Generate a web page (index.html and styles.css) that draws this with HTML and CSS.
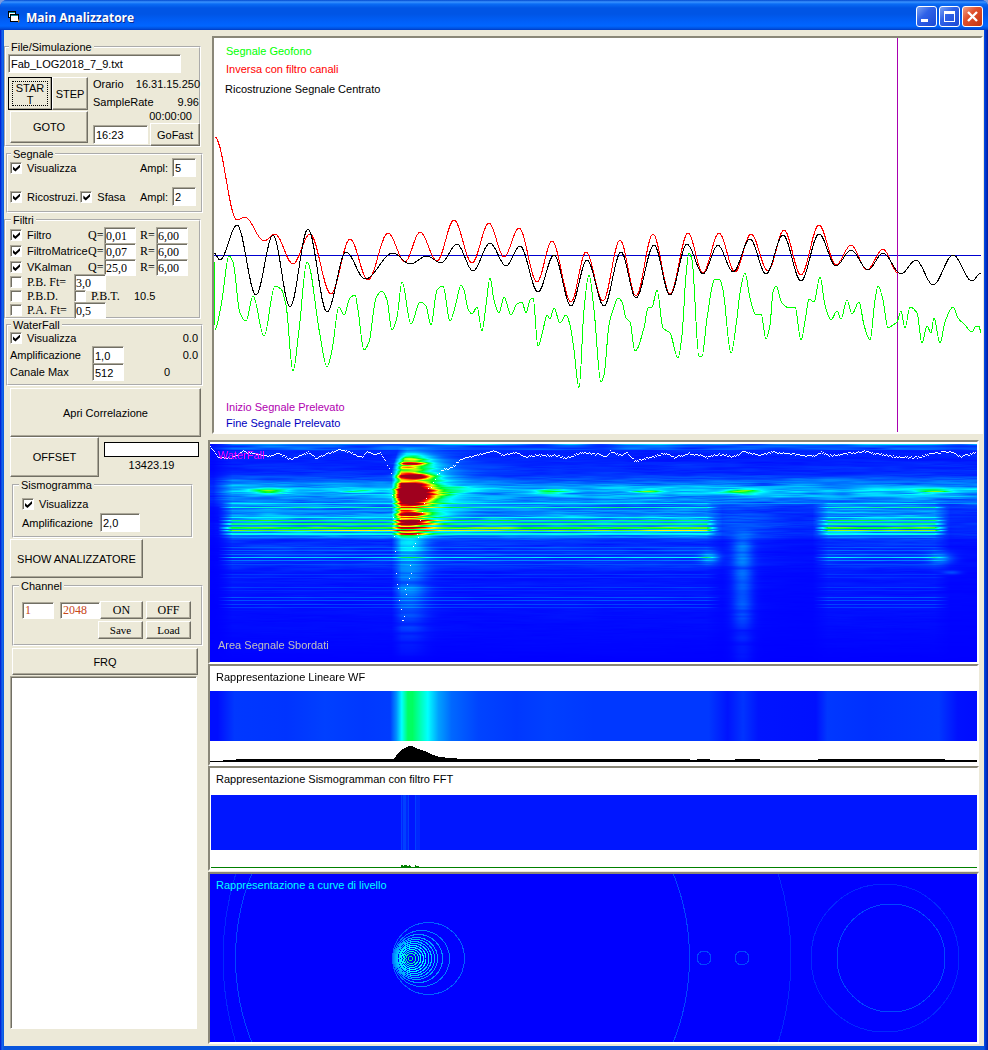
FILE: index.html
```html
<!DOCTYPE html>
<html lang="it">
<head>
<meta charset="utf-8">
<title>Main Analizzatore</title>
<link rel="stylesheet" href="styles.css">
</head>
<body>
<div class="window">
  <header class="titlebar">
    <svg class="app-icon" width="14" height="14" viewBox="0 0 14 14" aria-hidden="true">
      <rect x="1.5" y="1.5" width="7" height="6" fill="#fff" stroke="#000"/>
      <rect x="2" y="2" width="6" height="1" fill="#0a8a9a"/>
      <rect x="3.5" y="4.5" width="8" height="7" fill="#fff" stroke="#000"/>
      <rect x="4" y="5" width="7" height="1" fill="#0a8a9a"/>
      <path d="M11 9l2 2-2 2z" fill="#b87820"/>
    </svg>
    <h1 class="title">Main Analizzatore</h1>
    <div class="window-buttons">
      <button class="wb" aria-label="Riduci"><svg width="19" height="19"><rect x="4" y="12" width="7" height="3" fill="#fff"/></svg></button>
      <button class="wb" aria-label="Ingrandisci"><svg width="19" height="19"><path d="M4 4h11v11H4zM5 7v7h9V7z" fill="#fff" fill-rule="evenodd"/></svg></button>
      <button class="wb wb-close" aria-label="Chiudi"><svg width="19" height="19"><path d="M5 5l9 9M14 5l-9 9" stroke="#fff" stroke-width="2.4"/></svg></button>
    </div>
  </header>

  <main class="client">
    <section class="sidebar">
      <fieldset class="group group-file">
        <legend>File/Simulazione</legend>
        <input class="field file-name" aria-label="File" value="Fab_LOG2018_7_9.txt">
        <div class="file-body">
          <div class="file-buttons">
            <button class="btn btn-start">START</button>
            <button class="btn">STEP</button>
            <button class="btn btn-goto">GOTO</button>
          </div>
          <div class="file-info">
            <div class="pair"><span>Orario</span><span>16.31.15.250</span></div>
            <div class="pair pair-rate"><span>SampleRate</span><span>9.96</span></div>
            <div class="elapsed">00:00:00</div>
            <div class="go-row">
              <input class="field" aria-label="Ora" value="16:23">
              <button class="btn">GoFast</button>
            </div>
          </div>
        </div>
      </fieldset>

      <fieldset class="group wide group-segnale">
        <legend>Segnale</legend>
        <div class="seg-row">
          <label class="check"><input type="checkbox" checked>Visualizza</label>
          <label for="ampl1">Ampl:</label><input id="ampl1" class="field" value="5">
        </div>
        <div class="seg-row">
          <div class="seg-checks">
            <label class="check"><input type="checkbox" checked>Ricostruzi.</label>
            <label class="check"><input type="checkbox" checked>Sfasa</label>
          </div>
          <label for="ampl2">Ampl:</label><input id="ampl2" class="field" value="2">
        </div>
      </fieldset>

      <fieldset class="group group-filtri">
        <legend>Filtri</legend>
        <div class="filter-row">
          <label class="check"><input type="checkbox" checked>Filtro</label>
          <label class="serif" for="q1">Q=</label><input id="q1" class="field serif" value="0,01">
          <label class="serif" for="r1">R=</label><input id="r1" class="field serif" value="6,00">
        </div>
        <div class="filter-row">
          <label class="check"><input type="checkbox" checked>FiltroMatrice</label>
          <label class="serif" for="q2">Q=</label><input id="q2" class="field serif" value="0,07">
          <label class="serif" for="r2">R=</label><input id="r2" class="field serif" value="6,00">
        </div>
        <div class="filter-row">
          <label class="check"><input type="checkbox" checked>VKalman</label>
          <label class="serif" for="q3">Q=</label><input id="q3" class="field serif" value="25,0">
          <label class="serif" for="r3">R=</label><input id="r3" class="field serif" value="6,00">
        </div>
        <div class="band-row">
          <label class="check serif"><input type="checkbox">P.B. Ft=</label>
          <input class="field serif" aria-label="P.B. Ft" value="3,0">
        </div>
        <div class="band-row">
          <label class="check serif"><input type="checkbox">P.B.D.</label>
          <label class="check serif"><input type="checkbox">P.B.T.</label>
          <span>10.5</span>
        </div>
        <div class="band-row">
          <label class="check serif"><input type="checkbox">P.A. Ft=</label>
          <input class="field serif" aria-label="P.A. Ft" value="0,5">
        </div>
      </fieldset>

      <fieldset class="group wide group-waterfall">
        <legend>WaterFall</legend>
        <div class="wf-row"><label class="check"><input type="checkbox" checked>Visualizza</label><span class="num">0.0</span></div>
        <div class="wf-row"><label for="amp">Amplificazione</label><input id="amp" class="field" value="1,0"><span class="num">0.0</span></div>
        <div class="wf-row"><label for="can">Canale Max</label><input id="can" class="field" value="512"><span class="num-mid">0</span></div>
      </fieldset>

      <button class="btn btn-apri">Apri Correlazione</button>
      <div class="offset-row">
        <button class="btn">OFFSET</button>
        <div class="offset-value">
          <div class="gauge"></div>
          <span>13423.19</span>
        </div>
      </div>

      <fieldset class="group group-sismo">
        <legend>Sismogramma</legend>
        <label class="check"><input type="checkbox" checked>Visualizza</label>
        <div class="sismo-row"><label for="samp">Amplificazione</label><input id="samp" class="field" value="2,0"></div>
      </fieldset>

      <button class="btn btn-show">SHOW ANALIZZATORE</button>

      <fieldset class="group group-channel">
        <legend>Channel</legend>
        <div class="channel-row">
          <input class="field serif rust" aria-label="Canale iniziale" value="1">
          <input class="field serif rust" aria-label="Canale finale" value="2048">
          <button class="btn serif">ON</button>
          <button class="btn serif">OFF</button>
        </div>
        <div class="channel-row channel-files">
          <button class="btn serif small">Save</button>
          <button class="btn serif small">Load</button>
        </div>
      </fieldset>

      <button class="btn btn-frq">FRQ</button>
      <div class="list" role="listbox" aria-label="Frequenze"></div>
    </section>

    <section class="plots">
      <div class="panel chart">
        <svg class="fill" id="signals" viewBox="214 38 767 394" preserveAspectRatio="none" shape-rendering="crispEdges" fill="none">
          <path d="M214 255.5H981" stroke="#0000d0"/>
          <path d="M897.5 38V432" stroke="#a800b0"/>
          <path id="geofono" stroke="#00ff00"/>
          <path id="inversa" stroke="#ff0000"/>
          <path id="ricostruzione" stroke="#000"/>
        </svg>
        <div class="legend-top">
          <span class="c-green">Segnale Geofono</span>
          <span class="c-red">Inversa con filtro canali</span>
          <span class="c-black">Ricostruzione Segnale Centrato</span>
        </div>
        <div class="legend-bottom">
          <span class="c-purple">Inizio Segnale Prelevato</span>
          <span class="c-blue">Fine Segnale Prelevato</span>
        </div>
      </div>

      <div class="panel waterfall">
        <canvas class="fill" id="waterfall" width="767" height="218"></canvas>
        <span class="tag tag-top c-magenta">WaterFall</span>
        <span class="tag tag-bottom c-silver">Area Segnale Sbordati</span>
      </div>

      <div class="panel linear">
        <span class="caption">Rappresentazione Lineare WF</span>
        <div class="linear-band"></div>
        <svg class="histogram" viewBox="210 741 767 22" preserveAspectRatio="none" shape-rendering="crispEdges">
          <path d="M210 761H223V760H236V759H393L396 756L400 751L405 748L409 746H412L418 749L425 751L433 755L440 757L449 758L464 759H690V760H697V759H710V760H735V759H760V760H818V759H945V760H977V762H210Z"/>
        </svg>
      </div>

      <div class="panel fft">
        <span class="caption">Rappresentazione Sismogramman con filtro FFT</span>
        <svg class="fft-band" viewBox="211 795 766 55" preserveAspectRatio="none" shape-rendering="crispEdges">
          <path fill="#0016ff" d="M211 795h766v55H211z"/>
          <path fill="#0040ff" d="M401 795h1v55h-1zM403 795h3v55h-3zM408 795h1v55h-1zM415 795h1v55h-1z"/>
          <path fill="#0026ff" d="M402 795h1v55h-1zM406 795h2v55h-2zM416 795h4v55h-4z"/>
        </svg>
        <svg class="fft-trace" viewBox="211 850 766 19" preserveAspectRatio="none" shape-rendering="crispEdges">
          <path fill="#008000" d="M211 867h190v-2h2v1h1v-1h3v1h2v-1h1v1h1v1h4v-2h1v1h3v1h558v1H211z"/>
        </svg>
      </div>

      <div class="panel levels">
        <svg class="fill" viewBox="210 874 767 168" preserveAspectRatio="xMidYMid slice" shape-rendering="crispEdges" fill="none">
          <g stroke="#0028ff">
            <circle cx="507" cy="958" r="284"/>
            <circle cx="885" cy="958" r="74"/>
          </g>
          <g stroke="#0048ff">
            <circle cx="462.5" cy="958" r="227"/>
            <circle cx="891" cy="958" r="54"/>
            <circle cx="704" cy="958" r="7"/>
            <circle cx="742" cy="958" r="7"/>
          </g>
          <g id="contours"></g>
        </svg>
        <span class="tag tag-level c-cyan">Rappresentazione a curve di livello</span>
      </div>
    </section>
  </main>
</div>
<script src="plots.js"></script>
</body>
</html>
```

FILE: styles.css
```css
* { box-sizing: border-box; }

body {
  margin: 0;
  background: #7a9be0;
  color: #000;
  font: 11px/14px "Liberation Sans", Arial, sans-serif;
}

button, input { font: inherit; color: inherit; margin: 0; border-radius: 0; }

.window {
  display: flex;
  flex-direction: column;
  min-height: 100vh;
  padding: 0 4px 4px;
  background: linear-gradient(90deg, #0019cf, #0831d9 1px, #166aee 2px, #0855dd 4px, #0855dd calc(100% - 4px), #003ddc calc(100% - 3px), #001ea0);
  border-radius: 7px 7px 0 0;
  overflow: hidden;
}

.titlebar {
  display: flex;
  align-items: center;
  height: 30px;
  margin: 0 -4px;
  padding: 3px 5px 0 7px;
  background: linear-gradient(#0048d0, #3a93ff 2px, #0a6cf5 4px, #0055e5 8px, #0055e5 14px, #0060fa 22px, #0066ff 26px, #004cd8 29px, #0038c0);
}

.app-icon { flex: none; }
.title {
  flex: 1;
  margin: 0 0 0 5px;
  padding-top: 2px;
  color: #fff;
  font: bold 12px/18px "Open Sans", "Noto Sans", sans-serif;
  text-shadow: 1px 1px #0a2a90;
}

.window-buttons { display: flex; gap: 2px; }
.wb {
  width: 21px;
  height: 21px;
  padding: 0;
  border: 1px solid #fff;
  border-radius: 3px;
  background: linear-gradient(135deg, #7ba2f2, #2f62e8 40%, #1c48d4);
}
.wb svg { display: block; }
.wb-close { background: linear-gradient(135deg, #f0a088, #e0502c 40%, #c43410); }

.client { display: flex; flex: 1; background: #ece9d8; }

/* Sidebar */
.sidebar {
  display: flex;
  flex: none;
  flex-direction: column;
  align-items: flex-start;
  width: 204px;
  padding: 10px 0 17px;
  white-space: nowrap;
}

.group {
  width: 197px;
  min-width: 0;
  margin: 0;
  padding: 0 0 0 4px;
  border: 2px groove #fff;
}
.group legend { height: 14px; margin-left: 1px; padding: 0 2px; }
.wide { margin-left: 2px; }
.serif { font-family: "Liberation Serif", "Times New Roman", serif; font-size: 12px; }
.small { font-size: 11px; }
.rust { color: #c84818; }

.field {
  min-width: 0;
  width: 100%;
  height: 19px;
  padding: 1px 2px 0;
  border: 1px solid;
  border-color: #aca899 #fff #fff #aca899;
  background: #fff;
  box-shadow: inset 1px 1px #716f64;
}

.btn {
  padding: 0;
  border: 1px solid;
  border-color: #fff #716f64 #716f64 #fff;
  background: #ece9d8;
  box-shadow: inset -1px -1px #aca899;
}

.check { display: flex; align-items: center; gap: 5px; }
.check input {
  appearance: none;
  flex: none;
  width: 12px;
  height: 12px;
  border: 1px solid;
  border-color: #aca899 #fff #fff #aca899;
  background: #fff;
  box-shadow: inset 1px 1px #716f64;
}
.check input:checked::before {
  content: "";
  display: block;
  width: 7px;
  height: 7px;
  margin: 2px 0 0 2px;
  background: #000;
  clip-path: polygon(0 30%, 35% 60%, 100% 0, 100% 40%, 35% 100%, 0 70%);
}

.group-file { padding-left: 2px; }
.file-name { display: block; width: 173px; }
.file-body { display: flex; gap: 5px; margin-top: 4px; height: 68px; }
.file-buttons {
  display: grid;
  flex: none;
  grid-template-columns: 44px 36px;
  grid-template-rows: 33px 32px;
  row-gap: 1px;
  width: 80px;
}
.btn-start {
  padding: 0 4px;
  border-color: #000;
  line-height: 12px;
  word-break: break-all;
  white-space: normal;
  outline: 1px dotted #000;
  outline-offset: -5px;
}
.btn-goto { grid-column: 1 / 3; margin-left: 2px; }
.file-info { flex: 1; }
.pair { display: flex; justify-content: space-between; }
.pair-rate { margin-top: 4px; padding-right: 1px; }
.elapsed { padding-right: 8px; text-align: right; }
.go-row {
  display: grid;
  grid-template-columns: 55px 50px;
  gap: 2px;
  align-items: center;
}
.go-row .btn { height: 23px; }

.group-segnale { padding-left: 2px; padding-bottom: 5px; }
.seg-row {
  display: grid;
  grid-template-columns: 130px 32px 24px;
  align-items: center;
  height: 19px;
  margin-top: -3px;
}
.seg-row + .seg-row { margin-top: 10px; }
.seg-checks { display: flex; gap: 2px; }

.filter-row, .band-row { display: grid; grid-auto-rows: 100%; align-items: center; height: 16px; }
.filter-row { grid-template-columns: 78px 16px 36px 16px 32px; }
.band-row { grid-template-columns: 64px 60px 40px; height: 14px; }
.group-filtri .field { width: 32px; height: 17px; padding: 2px 1px 0; }

.wf-row {
  display: grid;
  grid-template-columns: 82px 32px 1fr;
  align-items: center;
  height: 17px;
}
.wf-row:first-of-type { margin-top: -3px; }
.group-waterfall { margin-top: -1px; padding-left: 2px; padding-bottom: 4px; }
.wf-row .field { height: 18px; }
.num { grid-column: 3; padding-right: 3px; text-align: right; }
.num-mid { padding-left: 40px; }

.btn-apri { width: 191px; height: 49px; margin: 2px 0 0 6px; }
.offset-row { display: flex; gap: 5px; margin-left: 6px; }
.offset-row .btn { width: 89px; height: 40px; }
.offset-value { width: 95px; padding-top: 5px; text-align: center; }
.gauge { height: 15px; margin-bottom: 1px; border: 1px solid #000; background: #fff; }

.group-sismo { width: 181px; margin: 1px 0 0 8px; padding: 0 0 4px 8px; }
.group-sismo legend { margin-left: -3px; }
.group-sismo .check { height: 12px; margin-top: 6px; }
.sismo-row { display: grid; grid-template-columns: 78px 40px; margin-top: 3px; align-items: center; }

.btn-show { width: 133px; height: 39px; margin: 1px 0 0 6px; }

.group-channel { width: 191px; margin: 1px 0 0 8px; padding: 8px 0 5px 8px; }
.group-channel legend { margin-left: -3px; }
.channel-row {
  display: grid;
  grid-template-columns: 38px 40px 43px 45px;
  align-items: center;
}
.channel-row .field { height: 17px; }
.channel-row .field:first-child { width: 32px; }
.channel-row .btn { height: 18px; }
.channel-row .btn:last-child { margin-left: 3px; width: 45px; }
.channel-files { grid-template-columns: 76px 45px 45px; margin-top: 2px; }
.channel-files .btn:first-child { grid-column: 2; }

.btn-frq { width: 186px; height: 27px; margin: 2px 0 0 8px; }
.list {
  flex: 1;
  width: 187px;
  margin: 1px 0 0 6px;
  border: 1px solid;
  border-color: #aca899 #fff #fff #aca899;
  background: #fff;
  box-shadow: inset 1px 1px #716f64;
}

/* Plots */
.plots { display: flex; flex: 1; flex-direction: column; min-width: 0; padding: 6px 0 2px; }
.panel {
  position: relative;
  margin-right: 5px;
  border: 2px solid;
  border-color: #8a8778 #fff #fff #8a8778;
  background: #fff;
}
.fill { display: block; width: 100%; height: 100%; }

.chart { flex: 1 1 398px; margin: 0 1px 6px 4px; min-height: 300px; }
.chart .fill { position: absolute; inset: 0; }
.legend-top, .legend-bottom { position: absolute; display: flex; flex-direction: column; left: 12px; }
.legend-top { top: 6px; gap: 4px; }
.legend-bottom { bottom: 2px; gap: 2px; }

.waterfall { height: 224px; padding-top: 2px; }
.tag { position: absolute; left: 8px; }
.tag-top { top: 6px; }
.tag-bottom { bottom: 10px; }
.tag-level { left: 6px; top: 4px; }

.linear { height: 102px; }
.caption { display: block; height: 25px; padding: 4px 6px 0; }
.linear-band {
  height: 50px;
  background: linear-gradient(90deg,
    #000eff 0, #000eff 1%, #0038ff 3.2%, #0034ff 10%, #0040ff 15%, #0038ff 20%, #003cff 23.5%,
    #0090ff 24.3%, #00ffff 25%, #00ff60 25.8%, #00ff60 26.4%, #00ffc0 27.6%, #00ffff 28.4%,
    #00a0ff 29.8%, #0068ff 31.5%, #0044ff 35%, #0038ff 40%, #0040ff 44%, #0038ff 50%, #0038ff 65%,
    #0014ff 67.5%, #0034ff 69.5%, #0014ff 71.5%, #0010ff 79%, #0038ff 80.5%, #0030ff 86%, #0038ff 95%, #0010ff 97.5%, #000cff);
}
.histogram { display: block; width: 100%; height: 22px; }

.fft { height: 105px; margin-bottom: 1px; }
.fft .caption { height: 27px; }
.fft-band, .fft-trace { display: block; width: 100%; padding-left: 1px; }
.fft-band { height: 55px; }
.fft-trace { height: 19px; }

.levels { height: 172px; background: #00f; }

.c-green { color: #00ff00; }
.c-red { color: #ff0000; }
.c-black { color: #000; margin-left: -1px; padding-top: 2px; }
.c-purple { color: #b000b0; }
.c-blue { color: #0000c0; }
.c-magenta { color: #ff00ff; }
.c-silver { color: #c0c0c0; }
.c-cyan { color: #00ffff; }
```

FILE: plots.js
```js
const pairs = text => text.trim().split(/\s+/).map(p => p.split(',').map(Number));

const geofono = pairs(`214,255 215,330 217,325 222,300 229,256 233,262 240,313 246,321 253,296 264,336 275,286 281,289
286,305 293,371 299,330 307,262 320,335 327,367 332,350 339,307 344,315 350,298 355,295 358,310 364,350 369,342 376,298
382,291 387,300 392,330 397,317 402,282 411,324 420,302 426,306 431,325 437,290 443,286 450,321 456,303 461,285 464,290
468,309 472,314 477,307 482,331 486,305 490,278 494,300 499,313 504,297 511,315 517,304 522,302 526,313 530,300 533,298
538,346 543,330 547,315 550,319 554,308 560,323 566,315 570,325 574,350 579,388 584,310 589,275 594,310 601,382 604,375
609,325 613,310 618,298 622,302 626,318 630,322 635,351 644,328 648,308 652,307 657,290 663,328 670,333 678,358 682,335
686,275 689,253 692,260 699,356 702,356 707,318 715,279 720,280 723,290 731,353 737,318 740,293 745,273 750,298 756,315
761,314 766,339 770,325 773,292 776,286 782,303 789,308 795,307 801,340 806,315 809,299 814,302 820,277 825,305 831,320
837,311 841,319 847,300 852,314 859,302 864,325 870,340 875,300 878,286 883,300 888,328 893,325 897,322 901,311 905,328
910,307 917,313 922,343 927,326 931,333 934,318 940,343 945,322 953,307 958,318 965,325 972,332 976,326 979,326 981,333`);

const inversa = pairs(`215,137 237,220 245,217 264,241 275,234 293,264 310,234 331,294 350,239 368,280 388,233 405,262
420,232 437,261 454,220 472,263 489,223 504,257 519,228 537,282 552,241 571,302 586,252 603,301 620,240 636,296 653,234
670,294 688,233 703,273 719,233 735,272 751,234 768,271 784,230 801,275 819,225 836,265 851,245 867,270 883,249 898,273`);

const ricostruzione = pairs(`214,253 220,260 237,225 256,295 273,235 290,307 308,229 327,312 346,252 365,279 393,253
410,264 427,256 441,263 457,244 473,271 490,243 506,266 520,246 538,292 554,255 571,306 587,260 604,306 621,252 636,298
654,245 670,295 687,244 703,274 718,245 733,272 750,239 766,274 783,235 801,281 819,234 836,266 851,250 868,270 883,253
901,274 916,260 933,285 953,255 972,281 981,273`);

// Cubic through the points: flat at each crest and trough, sloped where the signal passes on.
function curve(pts) {
  const last = pts.length - 1;
  const slope = pts.map(([x, y], i) => {
    if (i === 0 || i === last) return 0;
    const a = (y - pts[i - 1][1]) / (x - pts[i - 1][0]);
    const b = (pts[i + 1][1] - y) / (pts[i + 1][0] - x);
    return a * b <= 0 ? 0 : 2 * a * b / (a + b);
  });
  return pts.reduce((d, [x, y], i) => {
    if (!i) return `M${x} ${y}`;
    const [px, py] = pts[i - 1];
    const k = (x - px) * 0.36;
    return `${d}C${px + k} ${py + k * slope[i - 1]} ${x - k} ${y - k * slope[i]} ${x} ${y}`;
  }, '');
}

document.getElementById('geofono').setAttribute('d', curve(geofono));
document.getElementById('inversa').setAttribute('d', curve(inversa));
document.getElementById('ricostruzione').setAttribute('d', curve(ricostruzione));

// Level curves: centre x, radius, colour
const contours = [
  [428.5, 36, '#0064ff'], [421.5, 28, '#0080ff'], [418.5, 24, '#0094ff'], [416.5, 21, '#00a8ff'],
  [415.5, 19, '#00b8ff'], [414.5, 17, '#00c8ff'], [414, 15, '#00dcff'], [413, 13, '#00f0ff'],
  [412.5, 11, '#00ffff'], [412, 9, '#00fff0'], [411.5, 7, '#00ffd0'], [411, 5, '#00ffa0'], [410.5, 2, '#00ff70']
];
document.getElementById('contours').innerHTML = contours
  .map(([cx, r, c]) => `<circle cx="${cx}" cy="958.5" r="${r}" stroke="${c}"/>`).join('');

// Waterfall
const canvas = document.getElementById('waterfall');
const ctx = canvas.getContext('2d');
const X0 = 210, Y0 = 444;

function hash(a, b) {
  let h = Math.imul(a | 0, 374761393) + Math.imul(b | 0, 668265263);
  h = Math.imul(h ^ (h >>> 13), 1274126177);
  return ((h ^ (h >>> 16)) >>> 0) / 4294967296;
}
function noise(x, y, sx, sy) {
  const u = x / sx, v = y / sy, i = Math.floor(u), j = Math.floor(v);
  const s = t => t * t * (3 - 2 * t);
  const fu = s(u - i), fv = s(v - j);
  const top = hash(i, j) * (1 - fu) + hash(i + 1, j) * fu;
  const bottom = hash(i, j + 1) * (1 - fu) + hash(i + 1, j + 1) * fu;
  return top * (1 - fv) + bottom * fv;
}
const ramp = (x, a, b) => Math.min(1, Math.max(0, (x - a) / (b - a)));
const bell = (x, c, w) => Math.exp(-(x - c) * (x - c) / (w * w));

const stops = [[0, 0, 0, 255], [0.34, 0, 255, 255], [0.5, 0, 255, 30], [0.64, 255, 255, 0], [0.8, 255, 0, 0], [0.92, 160, 0, 30], [1, 160, 0, 30]];
function colour(v) {
  v = Math.min(1, Math.max(0, v));
  let i = 1;
  while (v > stops[i][0]) i++;
  const a = stops[i - 1], b = stops[i], t = (v - a[0]) / (b[0] - a[0]);
  return [1, 2, 3].map(k => a[k] + (b[k] - a[k]) * t);
}

// row, strength
const lines = new Map([[503, .30], [504, .12], [507, .40], [508, .12], [510, .2], [514, .17], [517, .33], [520, .46], [521, .25],
  [523, .42], [524, .42], [527, .52], [528, .5], [530, .58], [531, .3], [533, .36], [534, .34], [537, .17], [547, .12],
  [550, .13], [554, .15], [557, .30], [560, .17], [564, .1], [574, .07], [577, .06], [587, .08], [590, .05],
  [597, .11], [600, .1], [604, .09], [607, .08]]);

const level = [[444, .05], [460, .04], [474, .06], [483, .16], [489, .24], [493, .24], [498, .19], [506, .16], [520, .19],
  [534, .18], [540, .06], [565, .06], [572, .03], [610, .02], [662, 0]];
function depth(y) {
  for (let i = 1; i < level.length; i++) {
    if (y <= level[i][0]) {
      const [a, p] = level[i - 1], [b, q] = level[i];
      return p + (q - p) * (y - a) / (b - a);
    }
  }
  return 0;
}

// Hot rows of the burst: row, half height, strength
const hot = [[456, 2, .08], [459, 1.5, .18], [463, 1.3, .36], [467, 1.5, .12], [476, 2.4, .56], [484, 1.6, .4],
  [490, 4, .62], [498, 4, .58], [504, 1.6, .2], [514, 1.7, .5], [522, 2.2, .34], [527, 1.5, .12], [533, 1.3, .16]];

function intensity(x, y) {
  const streak = noise(x, y, 38, 1.6) * 0.6 + noise(x + 500, y, 16, 1) * 0.4;
  const wide = noise(x, y, 70, 4);
  const start = ramp(x, 213, 232);
  const active = Math.max(ramp(x, 217, 232) * (1 - ramp(x, 706, 722)), ramp(x, 812, 828) * (1 - ramp(x, 934, 950)));
  const rest = 0.3 + 0.25 * bell(x, 745, 35);
  const lower = 1 - ramp(y, 497, 510) * (1 - rest) * (1 - active);
  let v = depth(y) * (0.3 + streak * 0.95 + wide * 0.45) * (0.25 + 0.75 * start) * lower;
  if (y < 450) v += (y < 445 ? 0.28 : 0.12) * noise(x, y, 30, 2) * (0.3 + 0.7 * start);
  const line = lines.get(y) || 0;
  const reach = y === 503 ? Math.max(active, 0.65 * start) : active;
  v = Math.max(v, line * reach * (0.85 + 0.3 * streak));
  v += 0.3 * bell(y, 491, 2.5) * (0.4 + streak) * (bell(x, 268, 18) + bell(x, 553, 16) + bell(x, 647, 18) + bell(x, 742, 18) + bell(x, 930, 20) + 0.5 * bell(x, 358, 18));

  // Main burst: a broad green body, hot rows in it, and a cyan wake on the right
  const left = 391 + 6 * ramp(y, 470, 450);
  const edge = ramp(x, left, left + 10);
  const rough = 0.7 + 0.6 * noise(x, y, 14, 1.5);
  const spread = 20 + 16 * bell(y, 488, 22);
  const fall = x < 410 ? 1 : Math.exp(-Math.pow((x - 410) / spread, 1.6));
  const upper = ramp(y, 446, 462) * (1 - ramp(y, 524, 539));
  v += edge * fall * 0.36 * upper * rough;
  const heat = hot.reduce((sum, [row, h, s]) => sum + s * bell(y, row, h), 0);
  v += heat * bell(x, 411, x < 411 ? 13 : 18) * (0.85 + 0.3 * noise(x, y, 9, 1.5));
  v += edge * 0.18 * Math.exp(-Math.max(0, x - 415) / 34) * ramp(y, 446, 464) * (1 - ramp(y, 500, 545));
  if (y > 530) v += edge * bell(x, 409, x < 409 ? 24 : 17) * 0.2 * (0.4 + noise(3, y, 10, 3)) * (1 - ramp(y, 545, 662));

  // Minor echoes
  v += 0.17 * bell(x, 742, 10) * ramp(y, 525, 545) * (0.2 + 0.5 * noise(9, y, 10, 7) + 0.4 * noise(4, y, 10, 2)) * (1 - ramp(y, 570, 662) * 0.85);
  v += 0.15 * bell(x, 710, 10) * bell(y, 557, 6) + 0.14 * bell(x, 941, 12) * bell(y, 558, 6);
  v += 0.09 * bell(x, 951, 9) * bell(y, 572, 2);
  return v;
}

const image = ctx.createImageData(canvas.width, canvas.height);
for (let j = 0; j < canvas.height; j++) {
  for (let i = 0; i < canvas.width; i++) {
    const [r, g, b] = colour(intensity(i + X0, j + Y0));
    const k = (j * canvas.width + i) * 4;
    image.data[k] = r;
    image.data[k + 1] = g;
    image.data[k + 2] = b;
    image.data[k + 3] = 255;
  }
}
ctx.putImageData(image, 0, 0);

// Dotted threshold trace
ctx.fillStyle = '#fff';
const dot = (x, y) => ctx.fillRect(Math.round(x) - X0, Math.round(y) - Y0, 1, 1);
const trace = (pts, jitter) => {
  for (let i = 1; i < pts.length; i++) {
    const [ax, ay] = pts[i - 1], [bx, by] = pts[i];
    for (let x = ax; x < bx; x++) dot(x, ay + (by - ay) * (x - ax) / (bx - ax) + (hash(x, 77) - 0.5) * jitter);
  }
};
trace(pairs(`210,446 218,457 230,458 243,451 258,454 268,456 278,453 290,459 308,452 316,458 330,452 339,449 350,452
362,457 367,451 374,455 380,452 386,462`), 1.5);
pairs(`387,465 389,468 391,473 392,495 393,517 394,536 395,551 396,573 397,584 398,588 399,600 401,609 402,620 403,620
404,616 405,589 406,594 407,584 409,578 410,565 411,573 413,546 415,543 417,534 418,537 420,520 422,512 424,503 426,498
428,488 431,487 433,482 435,479 437,474 439,473 441,470`).forEach(([x, y]) => dot(x, y));
trace(pairs(`442,469 451,468 459,460 470,456 494,451 504,455 515,452 525,456 540,455 556,455 566,458 580,452 592,453
606,456 610,451 622,455 627,452 635,461 650,457 664,453 674,457 690,453 707,457 716,454 734,456 743,451 757,455 770,452
789,453 813,456 821,452 829,455 848,453 864,451 880,454 900,457 920,457 932,453 950,451 960,456 976,452`), 2);
```
